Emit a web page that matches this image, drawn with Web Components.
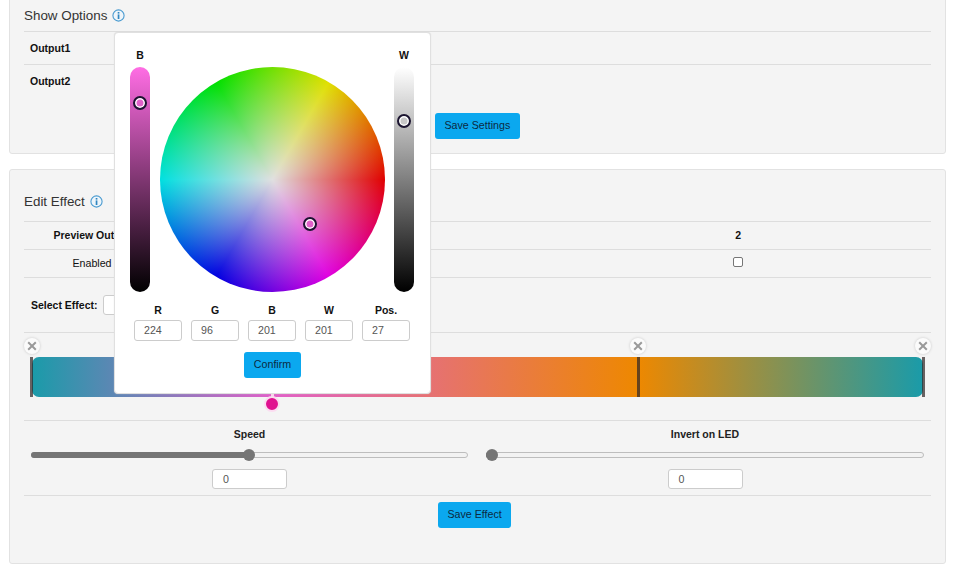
<!DOCTYPE html>
<html>
<head>
<meta charset="utf-8">
<style>
  html, body { margin: 0; padding: 0; background: #fff; overflow: hidden; }
  body { font-family: "Liberation Sans", Arial, sans-serif; font-size: 10.67px; color: #111; height: 568px; }
  b { font-size: 10.5px; }
</style>
</head>
<body>
<led-page>
  <led-card style="--top:-10px; --h:164px; --pt:8px; --th:32px">
    <led-title>Show Options</led-title>
    <led-row><b>Output1</b></led-row>
    <led-row last><b>Output2</b></led-row>
    <led-actions style="--pad:16px 0 0 411px"><led-btn>Save Settings</led-btn></led-actions>
  </led-card>
  <led-card style="--top:15px; --h:395px; --pt:11px; --th:40px">
    <led-title>Edit Effect</led-title>
    <led-grid-row h="28"><b>Preview Output</b><span></span><b>2</b></led-grid-row>
    <led-grid-row h="28"><span>Enabled</span><span></span><led-check></led-check></led-grid-row>
    <led-select-row>Select Effect:</led-select-row>
    <led-gradient></led-gradient>
    <led-params></led-params>
    <led-actions style="--pad:6px 0 0 414px"><led-btn>Save Effect</led-btn></led-actions>
  </led-card>
  <led-picker></led-picker>
</led-page>

<script>
const tpl = (html) => {
  const t = document.createElement('template');
  t.innerHTML = html;
  return t;
};

const def = (name, html) => {
  const t = tpl(html);
  customElements.define(name, class extends HTMLElement {
    constructor() {
      super();
      this.attachShadow({ mode: 'open' }).appendChild(t.content.cloneNode(true));
    }
  });
};

def('led-page', `
  <style>:host { display: block; position: relative; width: 953px; height: 568px; overflow: hidden; }</style>
  <slot></slot>`);

def('led-card', `
  <style>
    :host { display: block; box-sizing: border-box; margin: var(--top) 7px 0 9px; width: 937px; height: var(--h);
      background: #f4f4f4; border: 1px solid #e2e2e2; border-radius: 3px; padding: var(--pt, 0) 14px 0; }
  </style><slot></slot>`);

const INFO = `<svg width="13" height="13" viewBox="0 0 13 13"><circle cx="6.5" cy="6.5" r="5.6" fill="#eef5fa" stroke="#4a9bd0" stroke-width="1.1"/><rect x="5.7" y="5.4" width="1.7" height="4.6" fill="#2f86c0"/><rect x="5.7" y="3" width="1.7" height="1.6" fill="#2f86c0"/></svg>`;

def('led-title', `
  <style>
    :host { display: flex; align-items: center; gap: 5px; height: var(--th); font-size: 13.4px; color: #333; border-bottom: 1px solid #ddd; }
    svg { display: block; }
  </style><slot></slot>${INFO}`);

def('led-row', `
  <style>
    :host { display: flex; align-items: center; height: 32px; padding-left: 6px; border-bottom: 1px solid #ddd; color: #111; }
    :host([last]) { border-bottom: 0; }
  </style><slot></slot>`);

def('led-actions', `<style>:host { display: block; padding: var(--pad); }</style><slot></slot>`);

def('led-btn', `
  <style>
    :host { display: inline-flex; align-items: center; justify-content: center; height: 26px; padding: 0 9.5px 2px; box-sizing: border-box;
      background: #0ba8ef; border-radius: 3px; font-size: 10.67px; color: #0b2a42; }
  </style><slot></slot>`);

customElements.define('led-grid-row', class extends HTMLElement {
  constructor() {
    super();
    this.attachShadow({ mode: 'open' }).innerHTML = `
      <style>
        :host { display: grid; grid-template-columns: 136px 1fr 1fr; align-items: center; justify-items: center; box-sizing: border-box;
          padding-bottom: 1px; border-bottom: 1px solid #ddd; color: #111; height: ${this.getAttribute('h')}px; }
      </style><slot></slot>`;
  }
});

def('led-check', `
  <style>
    :host { display: block; box-sizing: border-box; width: 10px; height: 10px; margin-top: -2px; background: #fff; border: 1px solid #767676; border-radius: 2px; }
  </style>`);

def('led-select-row', `
  <style>
    :host { display: flex; align-items: center; gap: 5px; height: 55px; padding-left: 7px; border-bottom: 1px solid #ddd; font-weight: bold; font-size: 10.5px; color: #111; box-sizing: border-box; }
    i { display: block; width: 160px; height: 18px; background: #fff; border: 1px solid #ccc; border-radius: 3px; }
  </style><slot></slot><i></i>`);

customElements.define('led-gradient', class extends HTMLElement {
  constructor() {
    super();
    const stops = [0, 68.05, 100];
    this.attachShadow({ mode: 'open' }).innerHTML = `
      <style>
        :host { display: block; position: relative; height: 88px; border-bottom: 1px solid #ddd; box-sizing: border-box; }
        .bar { position: absolute; left: 8px; top: 24px; width: 891px; height: 40px; border-radius: 7px;
          background: linear-gradient(90deg, #1a9ba9 0%, #e060c9 27%, #ee8800 68%, #1a9ba9 100%); }
        .tick { position: absolute; top: 24px; width: 3px; height: 40px; margin-left: -1.5px; background: rgba(50,40,40,.72); }
        .x { position: absolute; top: 5px; width: 16px; height: 16px; margin-left: -8px; border-radius: 50%; background: #fbfbfb; box-shadow: 0 0 3px rgba(0,0,0,.18); }
        .x svg { display: block; }
        .stem { position: absolute; left: 246.5px; top: 61px; width: 3px; height: 6px; background: #fbd3ec; }
        .pin { position: absolute; left: 240px; top: 63px; width: 12px; height: 12px; border-radius: 50%; background: #e0108f; border: 2px solid #fbdcf0; box-sizing: content-box; }
      </style>
      <div class="bar"></div>
      ${stops.map(p => `<div class="tick" style="left:${(p === 0 ? 7 : 8) + p * 8.91}px"></div>
        <div class="x" style="left:${8 + p * 8.91}px"><svg width="16" height="16" viewBox="0 0 16 16"><path d="M4.2 4.2l7.6 7.6M11.8 4.2l-7.6 7.6" stroke="#9a9a9a" stroke-width="2" fill="none"/></svg></div>`).join('')}
      <div class="stem"></div>
      <div class="pin"></div>`;
  }
});

customElements.define('led-range', class extends HTMLElement {
  constructor() {
    super();
    const pos = this.getAttribute('pos');
    this.attachShadow({ mode: 'open' }).innerHTML = `
      <style>
        :host { display: block; position: relative; height: 6px; box-sizing: border-box; background: #f2f2f2; border: 1px solid #bdbdbd; border-radius: 3px; }
        .fill { position: absolute; left: -1px; top: -1px; height: 6px; width: ${pos}; background: #757575; border-radius: 3px; }
        .th { position: absolute; left: ${pos}; top: 50%; width: 12px; height: 12px; margin: -6px 0 0 -6px; border-radius: 50%; background: #757575; }
      </style><div class="fill"></div><div class="th"></div>`;
  }
});

customElements.define('led-param', class extends HTMLElement {
  constructor() {
    super();
    this.attachShadow({ mode: 'open' }).innerHTML = `
      <style>
        :host { display: flex; flex-direction: column; align-items: center; font-weight: bold; font-size: 10.5px; color: #222; }
        .lab { height: 14px; line-height: 14px; margin-top: 6px; }
        led-range { width: 100%; margin-top: 11px; }
        .num { box-sizing: border-box; width: 75px; height: 20px; line-height: 18px; margin-top: 11px; padding-left: 10px; background: #fff; border: 1px solid #ccc; border-radius: 3px; font-weight: normal; font-size: 10.67px; color: #555; }
      </style>
      <div class="lab"><slot></slot></div>
      <led-range pos="${this.getAttribute('pos')}"></led-range>
      <div class="num">${this.getAttribute('val')}</div>`;
  }
});

def('led-params', `
  <style>
    :host { display: grid; grid-template-columns: 437px 438px; column-gap: 18px; height: 75px; padding-left: 7px; box-sizing: border-box; border-bottom: 1px solid #ddd; }
  </style>
  <led-param pos="49.8%" val="0">Speed</led-param>
  <led-param pos="1.2%" val="0">Invert on LED</led-param>`);

customElements.define('led-vslider', class extends HTMLElement {
  constructor() {
    super();
    const top = this.getAttribute('top');
    const col = this.getAttribute('col');
    const dot = this.getAttribute('dot');
    this.attachShadow({ mode: 'open' }).innerHTML = `
      <style>
        :host { display: flex; flex-direction: column; align-items: center; width: 20px; font-weight: bold; font-size: 10.5px; color: #111; }
        .lab { height: 15px; line-height: 15px; margin-bottom: 4px; }
        .track { position: relative; width: 20px; height: 225px; border-radius: 10px; background: linear-gradient(180deg, ${col}, #000); }
        .th { position: absolute; left: 3px; top: ${top}px; box-sizing: border-box; width: 14px; height: 14px; border-radius: 50%; background: ${dot}; border: 2px solid #1b1430; box-shadow: inset 0 0 0 1.5px #fff; }
      </style>
      <div class="lab"><slot></slot></div>
      <div class="track"><div class="th"></div></div>`;
  }
});

def('led-wheel', `
  <style>
    :host { display: block; position: relative; width: 225px; height: 225px; border-radius: 50%;
      background: radial-gradient(circle closest-side, #e0e0e0 0%, rgba(224,224,224,0) 100%),
        conic-gradient(from 0deg, #70e000 0deg, #e0e000 30deg, #e00000 90deg, #e000e0 150deg, #0000e0 210deg, #00e0e0 270deg, #00e000 330deg, #70e000 360deg); }
    .th { position: absolute; left: 143px; top: 150px; box-sizing: border-box; width: 14px; height: 14px; border-radius: 50%; background: #e060c9; border: 2px solid #1b1430; box-shadow: inset 0 0 0 1.5px #fff; }
  </style><div class="th"></div>`);

customElements.define('led-field', class extends HTMLElement {
  constructor() {
    super();
    this.attachShadow({ mode: 'open' }).innerHTML = `
      <style>
        :host { display: flex; flex-direction: column; align-items: center; width: 48px; font-weight: bold; font-size: 10.5px; color: #111; }
        .lab { height: 13px; line-height: 13px; margin-bottom: 3px; }
        .in { box-sizing: border-box; width: 48px; height: 21px; line-height: 18px; padding-left: 9px; background: #fff; border: 1px solid #ccc; border-radius: 3px; font-weight: normal; font-size: 10.67px; color: #555; }
      </style>
      <div class="lab"><slot></slot></div>
      <div class="in">${this.getAttribute('val')}</div>`;
  }
});

def('led-picker', `
  <style>
    :host { position: absolute; left: 114px; top: 32px; box-sizing: border-box; width: 317px; height: 362px; padding: 15px 16px 0 15px;
      background: #fff; border: 1px solid #e0e0e0; box-shadow: 0 0 1px #d4d4d4; border-radius: 4px; display: flex; flex-direction: column; }
    .top { display: flex; justify-content: space-between; align-items: flex-start; }
    led-wheel { margin-top: 19px; }
    .fields { display: flex; gap: 9px; padding-left: 4px; margin-top: 12px; }
    .act { display: flex; justify-content: center; margin-top: 11px; padding-left: 1px; }
    led-btn { width: 57px; padding: 0 0 2px; }
  </style>
  <div class="top">
    <led-vslider top="29" col="#ff6de4" dot="#e060c9">B</led-vslider>
    <led-wheel></led-wheel>
    <led-vslider top="47" col="#ffffff" dot="#c8c8c8">W</led-vslider>
  </div>
  <div class="fields">
    <led-field val="224">R</led-field>
    <led-field val="96">G</led-field>
    <led-field val="201">B</led-field>
    <led-field val="201">W</led-field>
    <led-field val="27">Pos.</led-field>
  </div>
  <div class="act"><led-btn>Confirm</led-btn></div>`);
</script>
</body>
</html>
